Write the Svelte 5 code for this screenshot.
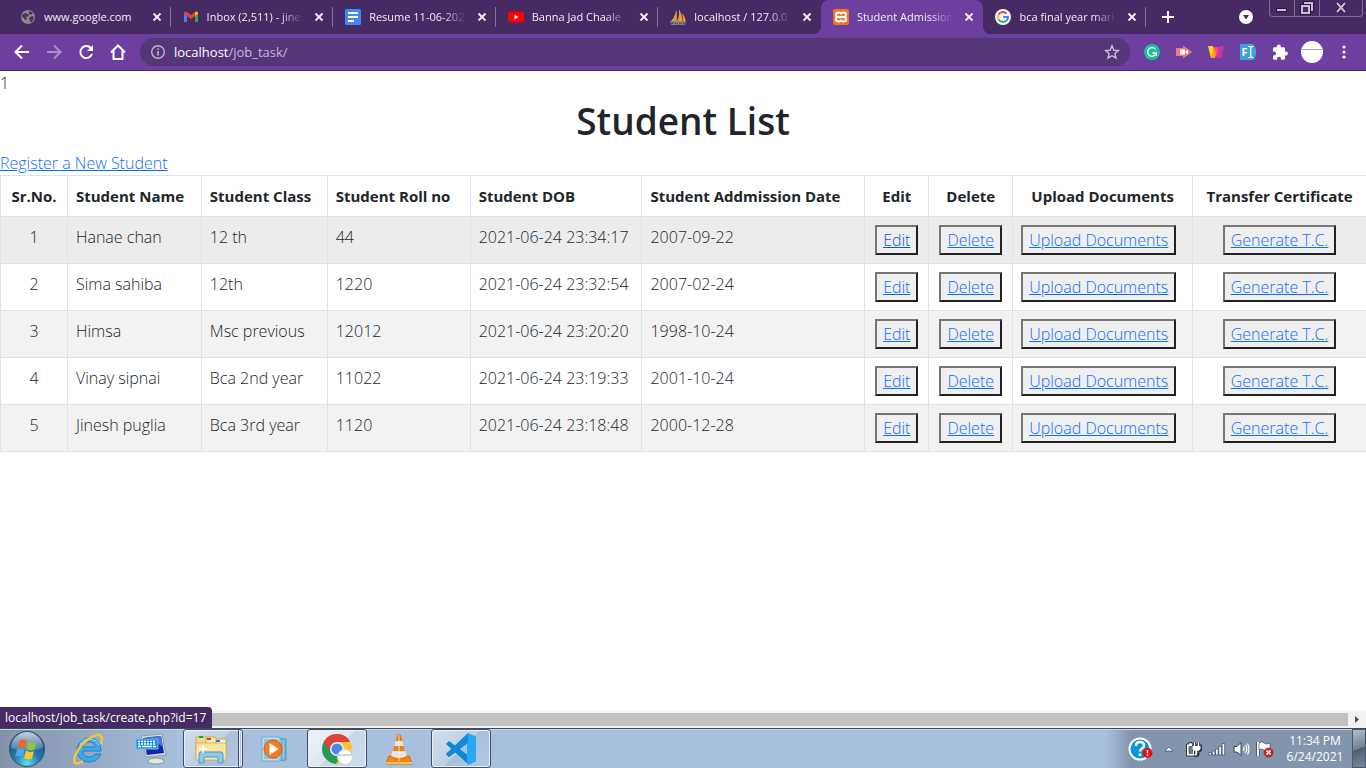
<script>
  const tabs = [
    { icon: 'globe', title: 'www.google.com' },
    { icon: 'gmail', title: 'Inbox (2,511) - jine' },
    { icon: 'docs', title: 'Resume 11-06-202' },
    { icon: 'youtube', title: 'Banna Jad Chaale' },
    { icon: 'pma', title: 'localhost / 127.0.0.' },
    { icon: 'xampp', title: 'Student Admission', active: true },
    { icon: 'google', title: 'bca final year mark' }
  ];

  const columns = [
    { label: 'Sr.No.', width: 67, center: true },
    { label: 'Student Name', width: 134 },
    { label: 'Student Class', width: 126 },
    { label: 'Student Roll no', width: 143 },
    { label: 'Student DOB', width: 172 },
    { label: 'Student Addmission Date', width: 223 },
    { label: 'Edit', width: 64, center: true },
    { label: 'Delete', width: 84, center: true },
    { label: 'Upload Documents', width: 180, center: true },
    { label: 'Transfer Certificate', width: 174, center: true }
  ];
  const total = columns.reduce((sum, c) => sum + c.width, 0);

  const students = [
    { name: 'Hanae chan', cls: '12 th', roll: '44', dob: '2021-06-24 23:34:17', admitted: '2007-09-22' },
    { name: 'Sima sahiba', cls: '12th', roll: '1220', dob: '2021-06-24 23:32:54', admitted: '2007-02-24' },
    { name: 'Himsa', cls: 'Msc previous', roll: '12012', dob: '2021-06-24 23:20:20', admitted: '1998-10-24' },
    { name: 'Vinay sipnai', cls: 'Bca 2nd year', roll: '11022', dob: '2021-06-24 23:19:33', admitted: '2001-10-24' },
    { name: 'Jinesh puglia', cls: 'Bca 3rd year', roll: '1120', dob: '2021-06-24 23:18:48', admitted: '2000-12-28' }
  ];
</script>

{#snippet favicon(name)}
  <svg class="favicon" viewBox="0 0 16 16" aria-hidden="true">
    {#if name === 'globe'}
      <circle cx="8" cy="8" r="7" fill="#8b8b8b" />
      <path d="M2 6l3-2 3 1 1 2-3 1 1 2-2 1-1-2-2-1zM9 2l4 2-2 2-2-1zM10 8l3-1 1 2-2 4-2 0 0-2-1-1z" fill="#4a3558" />
    {:else if name === 'gmail'}
      <path d="M1 4v9h3V7z" fill="#4285f4" />
      <path d="M15 4v9h-3V7z" fill="#34a853" />
      <path d="M1 4.5C1 2 3 2 4 3l4 3 4-3v4l-4 3-4-3-3-2z" fill="#ea4335" />
      <path d="M12 3c1-1 3-1 3 1.500v.5l-3 2z" fill="#fbbc04" />
    {:else if name === 'docs'}
      <rect width="16" height="16" rx="1.500" fill="#4285f4" />
      <path d="M3 4h10M3 8h10M3 12h6" stroke="#fff" stroke-width="2" />
    {:else if name === 'youtube'}
      <rect y="2.500" width="16" height="11" rx="3" fill="#f00" />
      <path d="M6.500 5.500v5L10.500 8z" fill="#fff" />
    {:else if name === 'pma'}
      <path d="M1 12c2-2 4-5 5-10 1 4 1 7 0 10zM7 12c2-3 2.500-7 2-11 2.500 3 3.500 7 3 11zM12.500 12c.5-3 .3-5-.5-8 2 2 3.500 5 3.500 8z" fill="#f29a1f" />
      <path d="M6.300 2v10M9.500 1v11" stroke="#b8a58c" stroke-width=".7" />
      <path d="M0 12h16l-1 4H1z" fill="#8d8599" />
      <path d="M1.500 15.500v-2h2v1h-2m4-1v2m0-1h2m0-1v2m2 0v-2l1 1 1-1v2m2 0v-2h1v2" fill="none" stroke="#4a4258" stroke-width=".7" />
    {:else if name === 'xampp'}
      <rect width="16" height="16" rx="2" fill="#ee7623" />
      <g fill="none" stroke="#fff" stroke-width="2">
        <path d="M6.500 8H5M9.500 8H11" />
        <path d="M8 5.500C8 4 7 3.500 5.500 3.500S3 4.500 3 5.800 4 8 5.500 8h5C12 8 13 7 13 5.800s-1-2.300-2.500-2.300S8 4 8 5.500z" />
        <path d="M8 10.500C8 12 7 12.500 5.500 12.500S3 11.500 3 10.200 4 8 5.500 8M10.500 8C12 8 13 9 13 10.200s-1 2.300-2.500 2.300S8 12 8 10.500" />
      </g>
    {:else}
      <circle cx="8" cy="8" r="8" fill="#fff" />
      <path d="M11.500 4.500A5 5 0 0 0 3.700 5.500" fill="none" stroke="#ea4335" stroke-width="2" />
      <path d="M3.700 5.500a5 5 0 0 0 0 5" fill="none" stroke="#fbbc05" stroke-width="2" />
      <path d="M3.700 10.500a5 5 0 0 0 7.500 1.300" fill="none" stroke="#34a853" stroke-width="2" />
      <path d="M11.200 11.800A5 5 0 0 0 13 8H8" fill="none" stroke="#4285f4" stroke-width="2" />
    {/if}
  </svg>
{/snippet}

<div class="screen">
  <header class="browser">
    <div class="tabstrip">
      <div class="tabs">
        <div class="tablist">
          {#each tabs as tab, i}
            <div class="tab" class:active={tab.active} class:divided={!tab.active && !tabs[i + 1]?.active}>
              {@render favicon(tab.icon)}
              <span class="title" class:faded={i > 0}>{tab.title}</span>
              <button class="close" aria-label="Close tab">
                <svg width="16" height="16" viewBox="0 0 16 16"><path d="M4.500 4.500l7 7m0-7l-7 7" stroke="#f5f2f8" stroke-width="1.800" /></svg>
              </button>
            </div>
          {/each}
        </div>
        <button class="newtab" aria-label="New tab">
          <svg width="16" height="16" viewBox="0 0 16 16"><path d="M8 2v12M2 8h12" stroke="#fff" stroke-width="2" /></svg>
        </button>
      </div>
      <button class="search-tabs" aria-label="Search tabs">
        <svg width="14" height="14" viewBox="0 0 14 14"><circle cx="7" cy="7" r="7" fill="#fff" /><path d="M4 5h6L7 9.500z" fill="#462a63" /></svg>
      </button>
      <div class="window">
        <button aria-label="Minimize"><svg width="12" height="12" viewBox="0 0 12 12"><rect x=".5" y="6.500" width="10" height="3" fill="#c8bdd3" stroke="#2a173c" /></svg></button>
        <button aria-label="Restore"><svg width="14" height="14" viewBox="0 0 14 14"><path d="M5 2h7v7H5z" fill="none" stroke="#2a173c" stroke-width="4" /><path d="M5 2h7v7H5z" fill="none" stroke="#c8bdd3" stroke-width="2" /><path d="M2 5h7v7H2z" fill="#462a63" stroke="#2a173c" stroke-width="4" /><path d="M2 5h7v7H2z" fill="#462a63" stroke="#c8bdd3" stroke-width="2" /></svg></button>
        <button class="quit" aria-label="Close"><svg width="12" height="12" viewBox="0 0 12 12"><path d="M2 1l8 9m0-9l-8 9" stroke="#2a173c" stroke-width="4" /><path d="M2 1l8 9m0-9l-8 9" stroke="#c8bdd3" stroke-width="2" /></svg></button>
      </div>
    </div>

    <div class="toolbar">
      <button class="tool" aria-label="Back"><svg width="16" height="16" viewBox="0 0 16 16"><path d="M15 8H2M8 1.500L1.500 8 8 14.500" fill="none" stroke="#fff" stroke-width="2" /></svg></button>
      <button class="tool" aria-label="Forward"><svg width="16" height="16" viewBox="0 0 16 16"><path d="M1 8h13M8 1.500L14.500 8 8 14.500" fill="none" stroke="#aa91c8" stroke-width="2" /></svg></button>
      <button class="tool" aria-label="Reload"><svg width="16" height="16" viewBox="0 0 16 16"><path d="M12.800 4A6 6 0 1 0 14 10" fill="none" stroke="#fff" stroke-width="2" /><path d="M15 1v6H9z" fill="#fff" /></svg></button>
      <button class="tool" aria-label="Home"><svg width="16" height="16" viewBox="0 0 16 16"><path d="M1 8.500L8 1.500l7 7M3.500 7v8h9V7" fill="none" stroke="#fff" stroke-width="2" /></svg></button>
      <div class="omnibox">
        <svg width="16" height="16" viewBox="0 0 16 16"><circle cx="8" cy="8" r="6.300" fill="none" stroke="#c2b4d4" stroke-width="1.400" /><path d="M8 7v4.500M8 4.200v1.600" stroke="#c2b4d4" stroke-width="1.600" /></svg>
        <span class="url"><b>localhost</b>/job_task/</span>
        <button class="star" aria-label="Bookmark this tab"><svg width="16" height="16" viewBox="0 0 16 16"><path d="M8 1.800l1.800 4.300 4.700.4-3.600 3 1.100 4.600L8 11.700l-4 2.400 1.100-4.600-3.600-3 4.700-.4z" fill="none" stroke="#d0c5dc" stroke-width="1.300" /></svg></button>
      </div>
      <div class="extensions">
        <button class="tool" aria-label="Grammar checker"><svg width="16" height="16" viewBox="0 0 16 16"><circle cx="8" cy="8" r="8" fill="#15c39a" /><path d="M11.500 5.200A4.400 4.400 0 1 0 12.300 9H8.500M12.300 8.500v3.300" fill="none" stroke="#fff" stroke-width="1.500" /></svg></button>
        <button class="tool" aria-label="Screen recorder"><svg width="16" height="16" viewBox="0 0 16 16"><path d="M0 4h7V1.500L16 8l-9 6.500V12H0z" fill="#f5777b" /><path d="M4 5.500h5v5H4zM9 8l3-2.500v5z" fill="#fff" /></svg></button>
        <button class="tool" aria-label="Writing tool"><svg width="16" height="16" viewBox="0 0 16 16"><path d="M0 2h5l2 12H3z" fill="#ffd51e" /><path d="M6 3h4l-3 11H3z" fill="#ff9f17" /><path d="M6 3h4l3 11H9z" fill="#f14b77" /><path d="M11 2h5l-3 12H9z" fill="#d82aa4" /></svg></button>
        <button class="tool" aria-label="Font finder"><svg width="16" height="16" viewBox="0 0 16 16"><path d="M1 0h12q3 3 3 8t-3 8H1q-1 0-1-1V1q0-1 1-1z" fill="#3ea2df" /><text x="1.500" y="12" font-size="11" font-weight="700" fill="#fff">F</text><path d="M8 2.500h2l.8 1 .8-1h2M8 13.500h2l.8-1 .8 1h2M10.800 3.500v9" fill="none" stroke="#fff" stroke-width="1.200" /></svg></button>
        <button class="tool" aria-label="Extensions"><svg width="16" height="16" viewBox="0 0 16 16"><path d="M14 7.500h-1V4.700c0-.8-.6-1.400-1.400-1.400H8.800V2.500a2 2 0 0 0-4 0v.8H2.400C1.600 3.300 1 4 1 4.700v2.800h1a2 2 0 0 1 0 4H1v2.800c0 .8.6 1.400 1.400 1.400h2.700v-1a2 2 0 0 1 4 0v1h2.500c.8 0 1.400-.6 1.400-1.400v-2.800h1a2 2 0 0 0 0-4z" fill="#fff" /></svg></button>
        <button class="tool" aria-label="Profile"><svg width="22" height="22" viewBox="0 0 22 22"><circle cx="11" cy="11" r="11" fill="#fff" /><path d="M1 8.500h20" stroke="#a8a8a8" /></svg></button>
        <button class="tool" aria-label="Menu"><svg width="16" height="16" viewBox="0 0 16 16"><g fill="#fff"><circle cx="8" cy="3" r="1.600" /><circle cx="8" cy="8" r="1.600" /><circle cx="8" cy="13" r="1.600" /></g></svg></button>
      </div>
    </div>
  </header>

  <main>
    <div>1</div>
    <h1>Student List</h1>
    <div><a href="#register">Register a New Student</a></div>
    <table>
      <colgroup>
        {#each columns as c}<col style="width: {(c.width / total) * 100}%" />{/each}
      </colgroup>
      <thead>
        <tr>
          {#each columns as c}<th scope="col" class:center={c.center}>{c.label}</th>{/each}
        </tr>
      </thead>
      <tbody>
        {#each students as s, i}
          <tr class:hovered={i === 0}>
            <td class="center">{i + 1}</td>
            <td>{s.name}</td>
            <td>{s.cls}</td>
            <td>{s.roll}</td>
            <td>{s.dob}</td>
            <td>{s.admitted}</td>
            <td class="center"><button class="action">Edit</button></td>
            <td class="center"><button class="action">Delete</button></td>
            <td><button class="action">Upload Documents</button></td>
            <td class="center"><button class="action">Generate T.C.</button></td>
          </tr>
        {/each}
      </tbody>
    </table>
  </main>

  <div class="scrollbar">
    <div class="thumb"></div>
    <svg width="18" height="17" viewBox="0 0 18 17"><path d="M7 5v7l4-3.500z" fill="#505050" /></svg>
    <div class="status">localhost/job_task/create.php?id=17</div>
  </div>

  <footer class="taskbar">
    <div class="apps">
      <button class="start" aria-label="Start">
        <svg width="38" height="38" viewBox="0 0 38 38">
          <defs>
            <radialGradient id="orb" cx=".5" cy=".9" r=".9"><stop offset="0" stop-color="#5fe0f5" /><stop offset=".4" stop-color="#2678ac" /><stop offset="1" stop-color="#1b4775" /></radialGradient>
            <linearGradient id="shine" x2="0" y2="1"><stop stop-color="#fff" stop-opacity=".75" /><stop offset="1" stop-color="#fff" stop-opacity=".15" /></linearGradient>
          </defs>
          <circle cx="19" cy="19" r="17.500" fill="url(#orb)" stroke="#33506d" />
          <path d="M3 18a16 16 0 0 1 32 0q-16 5-32 0z" fill="url(#shine)" />
          <path d="M11.500 10.500q4-2 7.500.5l-2 7.500q-3.500-2.500-7.500-.5z" fill="#f0642a" />
          <path d="M20.500 11.500q4 2.500 8 .5l-2 7.500q-4 2-8-.5z" fill="#8cc63e" />
          <path d="M9 19.500q4-2 7.500.5l-2 7.500q-3.500-2.500-7.500-.5z" fill="#4aa7e8" />
          <path d="M18 20.500q4 2.500 8 .5l-2 7.500q-4 2-8-.5z" fill="#fdc72c" />
        </svg>
      </button>

      <button class="app" aria-label="Internet Explorer">
        <svg width="32" height="32" viewBox="0 0 32 32">
          <path d="M28 18H10c0 4 3 6 6 6 3 0 5-1 6-3h6c-2 5-6 8-12 8C8 29 4 23 4 17S9 5 16 5s12 5 12 13zM10 14h12c0-3-3-5-6-5s-6 2-6 5z" fill="#39a9e9" stroke="#1f7fc4" fill-rule="evenodd" />
          <path d="M7 12Q9 6 16 6q7 0 10 6" fill="none" stroke="#a7e2ff" />
          <path d="M28 11c1-4 2-8-2-9C19 1 7 12 3 21c-4 9-1 12 7 7" fill="none" stroke="#f8c431" stroke-width="2.500" />
        </svg>
      </button>

      <button class="app" aria-label="On-screen keyboard">
        <svg width="32" height="32" viewBox="0 0 32 32">
          <path d="M6 3l21-2 4 21-20 2z" fill="#d9dde2" stroke="#939ba5" />
          <path d="M8 5l18-2 3 17-17 2z" fill="#0b27ad" /><path d="M14 4l12-1 2 11z" fill="#4b75d7" />
          <path d="M17 24l6-1 1 4-6 1z" fill="#a9b0b7" /><ellipse cx="21" cy="28" rx="8" ry="3" fill="#e2e5e7" stroke="#9299a1" />
          <rect x="1" y="6" width="22" height="10" fill="#268ede" stroke="#75bdf2" />
          <path d="M3 8.500h18M3 11h18" stroke="#fff" stroke-width="1.500" stroke-dasharray="2 1" /><path d="M3 13.500h3m1 0h10m1 0h3" stroke="#fff" stroke-width="1.500" />
        </svg>
      </button>

      <button class="app running stacked" aria-label="File Explorer">
        <svg width="34" height="32" viewBox="0 0 34 32">
          <path d="M2 4h10l2 3h18v20H2z" fill="#f1d98b" stroke="#c9a952" />
          <path d="M12 4h9l2 3h9v4H12z" fill="#f7e7ad" stroke="#c9a952" /><path d="M22 6h10v5H22z" fill="#fbf2cf" stroke="#c9a952" />
          <path d="M5 3h4v2H5z" fill="#12a33f" /><path d="M13 5h4v2h-4z" fill="#d43a23" /><path d="M22 7h4v2h-4z" fill="#1d86d4" />
          <path d="M2 10h30v17H2z" fill="#fbe9ab" stroke="#d2b464" /><path d="M4 12h26M4 15h26M4 18h26" stroke="#f4dc93" />
          <path d="M5 30v-9q0-2 2-2h20q2 0 2 2v9h-5v-6H10v6z" fill="#91c9ea" stroke="#4c98c9" />
          <path d="M9 12v8M5 16h8" stroke="#fff" stroke-width="1.500" />
        </svg>
      </button>

      <button class="app" aria-label="Media Player">
        <svg width="32" height="28" viewBox="0 0 32 28">
          <path d="M9 3l18 1v21l-18 1z" fill="#9ccfe7" stroke="#5a9abb" /><path d="M23 3v23M26 4v21" stroke="#4f94b7" />
          <path d="M3 2h18v24H3z" fill="#b9dff0" stroke="#72adca" /><path d="M5 4h14v20H5z" fill="#8dc2dc" />
          <circle cx="14" cy="14" r="9" fill="#f47b20" stroke="#d65d0c" /><path d="M10.500 8v12l9-6z" fill="#fff" />
        </svg>
      </button>

      <button class="app running current" aria-label="Google Chrome">
        <svg width="32" height="32" viewBox="0 0 32 32">
          <circle cx="16" cy="16" r="15" fill="#f8c43b" />
          <path d="M16 16L3 8.500A15 15 0 0 1 29 8.500H16z" fill="#db4437" />
          <path d="M16 16L3 8.500a15 15 0 0 0 12 22.400l7-11.500z" fill="#259b57" />
          <path d="M3 8.500L10 20l6-11h13A15 15 0 0 0 3 8.500z" fill="#db4437" />
          <circle cx="16" cy="16" r="7" fill="#f1f1f1" /><circle cx="16" cy="16" r="5.500" fill="#4a87ee" />
          <circle cx="24" cy="24" r="7.500" fill="#fff" stroke="#d5d5d5" /><path d="M17 22h14" stroke="#aaa" />
        </svg>
      </button>

      <button class="app" aria-label="VLC media player">
        <svg width="28" height="32" viewBox="0 0 28 32">
          <path d="M4 23h20l3 8H1z" fill="#f58a16" stroke="#cc6308" />
          <path d="M12 2q2-2 4 0l6 24q-8 4-16 0z" fill="#f27b0d" />
          <path d="M10.500 8h7l1.300 5H9.200zM7.500 18h13l1.300 5q-8 4-15.600 0z" fill="#e8e9e6" />
          <path d="M14 2v26" stroke="#fff" stroke-opacity=".35" stroke-width="2" />
          <path d="M1 30h26" stroke="#ffc24a" stroke-width="2" />
        </svg>
      </button>

      <button class="app running" aria-label="Visual Studio Code">
        <svg width="34" height="34" viewBox="0 0 34 34">
          <path d="M2 12l3-3 20 15v9z" fill="#0d87cf" />
          <path d="M2 22l3 3 20-15V1z" fill="#0a6fb8" />
          <path d="M24 1l8 3.500v25L24 33l-1-3V4z" fill="#29a8f2" />
          <path d="M2 22l3 3 19-14.500V1z" fill="#1689d4" />
        </svg>
      </button>
    </div>

    <div class="tray">
      <div class="indicators">
        <svg class="help" width="26" height="24" viewBox="0 0 26 24">
          <circle cx="12" cy="12" r="10.500" fill="#0b95dc" stroke="#fff" stroke-width="2" />
          <path d="M8 9q0-4 4-4t4 3.500q0 2-2 3t-2 3M12 16.500v2.500" fill="none" stroke="#fff" stroke-width="2.500" />
          <circle cx="19.500" cy="16" r="5" fill="#e80c12" /><path d="M19.500 13v3.500m0 1v1.500" stroke="#fff" stroke-width="1.600" />
        </svg>
        <svg width="18" height="18" viewBox="0 0 18 18"><path d="M5 11l4-4 4 4z" fill="#fff" stroke="#3d4c60" stroke-width=".7" /></svg>
        <svg width="18" height="18" viewBox="0 0 18 18">
          <path d="M5 2.500h3v1.500h2.500v12h-8V4H5z" fill="#fff" stroke="#2e3742" />
          <path d="M5 6.500h3.500v7H5z" fill="#6d7d92" stroke="#2e3742" stroke-width=".6" />
          <path d="M10.500 2v4M14.500 2v4M8 6h9v2q0 3-3 3.500V14q0 1.500-2 1.500h-2" fill="none" stroke="#2e3742" stroke-width="3" />
          <path d="M10.500 2v4M14.500 2v4M12.500 10v3.500q0 1.500-2 1.500" fill="none" stroke="#fff" stroke-width="1.400" />
          <path d="M8.500 6h8v2q0 3-4 3t-4-3z" fill="#fff" />
        </svg>
        <svg width="18" height="18" viewBox="0 0 18 18"><g fill="#fff" stroke="#3a4655" stroke-width=".7"><path d="M1 12.500h2.500V15H1zM4.300 11h2.500v4H4.300zM7.600 9h2.500v6H7.600zM10.900 6.500h2.500V15h-2.500zM14.200 3.500h2.500V15h-2.500z" /></g></svg>
        <svg width="18" height="18" viewBox="0 0 18 18"><path d="M2 6.500h3L9 2.500v13L5 12H2z" fill="#fff" stroke="#354151" /><path d="M11.500 7q1 2 0 4M13.500 5q2.500 4 0 8M15.500 3.500q3 5.500 0 11" fill="none" stroke="#fff" stroke-width="1.200" /></svg>
        <svg width="18" height="18" viewBox="0 0 18 18"><path d="M2 2v14" stroke="#394454" stroke-width="3.500" /><path d="M2 2v14" stroke="#fff" stroke-width="2" /><path d="M3 3q3-2 5 0t6 0v7q-3 2-6 0T3 10z" fill="#fff" stroke="#4a5667" stroke-width=".7" /><circle cx="12.500" cy="12.500" r="4.500" fill="#d9261c" stroke="#8e1310" stroke-width=".6" /><path d="M10.500 10.500l4 4m0-4l-4 4" stroke="#fff" stroke-width="1.700" /></svg>
      </div>
      <div class="clock"><span>11:34 PM</span><span>6/24/2021</span></div>
      <button class="desktop" aria-label="Show desktop"></button>
    </div>
  </footer>
</div>

<style>
  :global(body) { margin: 0; }
  .screen {
    min-height: 100vh;
    display: flex;
    flex-direction: column;
    overflow: hidden;
    background: #fff;
    color: #212529;
    font: 12px/16px "Open Sans", "Noto Sans", sans-serif;
  }
  button { font: inherit; color: inherit; background: none; border: 0; padding: 0; margin: 0; }
  svg { display: block; flex: none; }

  .browser { background: #6d40a0; border-bottom: 1px solid #462a63; }
  .tabstrip { display: flex; height: 34px; background: #462a63; color: #f1edf5; }
  .tabs { display: flex; flex: 1; min-width: 0; padding-left: 8px; }
  .tablist { display: flex; flex: 0 1 1138px; min-width: 0; }
  .tab {
    position: relative;
    display: flex;
    align-items: center;
    gap: 8px;
    box-sizing: border-box;
    flex: 1 1 0;
    min-width: 0;
    padding: 0 6px 0 12px;
  }
  .tab.divided::after { content: ""; position: absolute; right: 0; top: 7px; height: 20px; width: 1px; background: #84709a; }
  .tab.active { background: #6d40a0; border-radius: 8px 8px 0 0; }
  .tab.active::before, .tab.active::after { content: ""; position: absolute; bottom: 0; width: 8px; height: 8px; }
  .tab.active::before { left: -8px; background: radial-gradient(circle at 0 0, transparent 8px, #6d40a0 8px); }
  .tab.active::after { right: -8px; background: radial-gradient(circle at 100% 0, transparent 8px, #6d40a0 8px); }
  .favicon { width: 16px; height: 16px; }
  .title { flex: 1; min-width: 0; overflow: hidden; white-space: nowrap; font-size: 11px; }
  .title.faded { mask-image: linear-gradient(90deg, #000 76%, transparent); }
  .close { flex: none; }
  .newtab { width: 44px; display: grid; place-items: center; flex: none; }
  .search-tabs { width: 14px; margin-right: 16px; }
  .window {
    display: flex;
    align-self: flex-start;
    height: 17px;
    box-sizing: border-box;
    margin-right: 3px;
    border: 1px solid #806b93;
    border-top: 0;
    border-radius: 0 0 4px 4px;
  }
  .window button { width: 25px; display: grid; place-items: center; border-right: 1px solid #806b93; box-sizing: border-box; }
  .window .quit { width: 42px; border: 0; }

  .toolbar { display: flex; align-items: center; height: 36px; padding: 0 6px; }
  .tool { width: 32px; height: 32px; flex: none; display: grid; place-items: center; }
  .omnibox {
    flex: 1;
    min-width: 0;
    display: flex;
    align-items: center;
    gap: 8px;
    height: 28px;
    box-sizing: border-box;
    margin: 0 6px;
    padding: 0 10px;
    border-radius: 14px;
    background: #553779;
    color: #c5b6d8;
    font-size: 13px;
  }
  .url { flex: 1; }
  .url b { font-weight: 400; color: #fff; }
  .extensions { display: flex; }

  main { flex: 1; font-size: 16px; line-height: 24px; font-weight: 300; }
  h1 { margin: 0 0 4px; font-size: 37px; line-height: 52px; font-weight: 600; text-align: center; }
  main a { color: #0d6efd; }
  table { width: calc(100% + 1px); table-layout: fixed; border-collapse: collapse; }
  th, td { border: 1px solid #dee2e6; padding: 8px; text-align: left; vertical-align: top; white-space: nowrap; }
  th { font-weight: 700; font-size: 15px; }
  .center { text-align: center; padding-left: 0; padding-right: 0; }
  tbody tr:nth-child(odd) { background: #f2f2f2; }
  tbody tr.hovered { background: #ececec; }
  .action {
    display: inline-block;
    vertical-align: top;
    padding: 1px 6px;
    border: 2px solid;
    border-color: #767676 #212121 #212121 #767676;
    background: #efefef;
    color: #0d6efd;
    text-decoration: underline;
    cursor: pointer;
  }
  .hovered td:nth-child(7) .action { color: #0a58ca; }

  .scrollbar { position: relative; display: flex; align-items: center; height: 17px; background: #f1f1f1; }
  .thumb { flex: 1; height: 13px; background: #c1c1c1; }
  .status {
    position: absolute;
    left: 0;
    bottom: 0;
    padding: 3px 6px 2px 5px;
    border-radius: 0 4px 0 0;
    background: #462a63;
    color: #fff;
  }

  .taskbar {
    display: flex;
    justify-content: space-between;
    height: 40px;
    box-sizing: border-box;
    border-top: 1px solid #3e4a5a;
    box-shadow: inset 0 1px #c7d5e6;
    background: linear-gradient(90deg, #8293a9, #8d9fb8 50px, #a8c0dd 180px, #a8c0dd calc(100% - 260px), #8395ad calc(100% - 235px), #8395ad);
  }
  .apps { display: flex; gap: 2px; }
  .start { width: 57px; display: grid; align-items: center; justify-items: start; padding-left: 8px; box-sizing: border-box; }
  .app { width: 60px; display: grid; place-items: center; box-sizing: border-box; }
  .running {
    border: 1px solid #3f4f66;
    border-radius: 3px;
    box-shadow: inset 0 0 0 1px #e7eff8;
    background: linear-gradient(135deg, #d2dfed, #bfd0e4 50%, #a9c0dc 51%, #b3c8e1);
  }
  .current { background: linear-gradient(135deg, #f0f4f8, #dce6f1 50%, #c7d7e9 51%, #d0ddec); }
  .stacked { position: relative; padding-right: 4px; }
  .stacked::after { content: ""; position: absolute; top: 0; bottom: 0; right: 3px; width: 1px; background: #3f4f66; box-shadow: 1px 0 #e7eff8; }
  .tray { display: flex; align-items: center; color: #fff; }
  .indicators { display: flex; align-items: center; gap: 6px; padding-right: 4px; }
  .clock { width: 74px; display: grid; justify-items: center; }
  .desktop { align-self: stretch; width: 14px; box-sizing: border-box; border: 1px solid #4a586b; background: linear-gradient(160deg, #b2bdca, #738294 50%, #4f5f72 51%, #77879a); }
</style>
